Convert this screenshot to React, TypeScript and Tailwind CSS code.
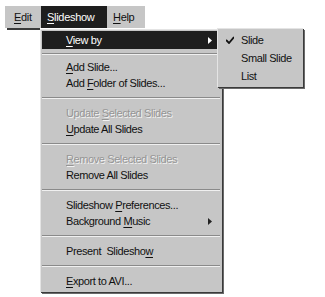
const font = { fontFamily: '"Liberation Sans", Arial, sans-serif' }

type Item =
  | { kind: 'sep' }
  | { kind: 'item'; pre: string; key: string; post: string; disabled?: boolean; arrow?: boolean; active?: boolean }

const items: Item[] = [
  { kind: 'item', pre: '', key: 'V', post: 'iew by', arrow: true, active: true },
  { kind: 'sep' },
  { kind: 'item', pre: '', key: 'A', post: 'dd Slide...' },
  { kind: 'item', pre: 'Add ', key: 'F', post: 'older of Slides...' },
  { kind: 'sep' },
  { kind: 'item', pre: 'Update ', key: 'S', post: 'elected Slides', disabled: true },
  { kind: 'item', pre: '', key: 'U', post: 'pdate All Slides' },
  { kind: 'sep' },
  { kind: 'item', pre: '', key: 'R', post: 'emove Selected Slides', disabled: true },
  { kind: 'item', pre: 'Remove All Slides', key: '', post: '' },
  { kind: 'sep' },
  { kind: 'item', pre: 'Slideshow ', key: 'P', post: 'references...' },
  { kind: 'item', pre: 'Background ', key: 'M', post: 'usic', arrow: true },
  { kind: 'sep' },
  { kind: 'item', pre: 'Present  Slidesho', key: 'w', post: '' },
  { kind: 'sep' },
  { kind: 'item', pre: '', key: 'E', post: 'xport to AVI...' },
]

function Arrow({ light }: { light?: boolean }) {
  return (
    <svg width="4" height="7" viewBox="0 0 4 7" className="mr-[8px]">
      <path d="M0 0 L4 3.5 L0 7 Z" fill={light ? '#ffffff' : '#222222'} />
    </svg>
  )
}

function MenuRow({ it, first }: { it: Extract<Item, { kind: 'item' }>; first: boolean }) {
  const text = it.disabled ? 'text-[#959595]' : it.active ? 'text-white' : 'text-[#111111]'
  return (
    <div
      className={`flex items-center justify-between pl-[24px] ${first ? 'h-[18px]' : 'h-[16px]'} ${
        it.active ? 'bg-[#1e1e1e]' : ''
      }`}
    >
      <span
        className={`text-[11px] tracking-[-0.4px] whitespace-pre ${text}`}
        style={it.disabled ? { textShadow: '1px 1px 0 #f2f2f2' } : undefined}
      >
        {it.pre}
        {it.key && <span className="underline underline-offset-2">{it.key}</span>}
        {it.post}
      </span>
      {it.arrow && <Arrow light={it.active} />}
    </div>
  )
}

function Separator({ first }: { first: boolean }) {
  return (
    <div className={`flex flex-col justify-center ${first ? 'h-[10px]' : 'h-[14px]'}`}>
      <div className="h-px bg-[#8a8a8a]" />
      <div className="h-px bg-[#f0f0f0]" />
    </div>
  )
}

export default function App() {
  return (
    <div className="w-[325px] h-[297px] bg-white overflow-hidden" style={font}>
      {/* menu bar */}
      <div className="ml-[5px] mt-[6px] w-[140px] h-[22px] bg-[#c6c6c6] flex items-center text-[11px] tracking-[-0.3px] text-[#111111]">
        <span className="ml-[9px] w-[27px]">
          <span className="underline underline-offset-2">E</span>dit
        </span>
        <span className="h-full px-[6px] flex items-center bg-[#1e1e1e] text-white w-[66px]">
          <span className="underline underline-offset-2">S</span>lideshow
        </span>
        <span className="ml-[6px]">
          <span className="underline underline-offset-2">H</span>elp
        </span>
      </div>
      <div className="flex items-start">
        <div className="ml-[7px] w-[33px] h-[2px] bg-[#3a3a3a]" />
        {/* dropdown */}
        <div className="mt-[1px] w-[182px] h-[263px] bg-[#c6c6c6] border-l border-t border-[#e4e4e4] shadow-[1px_1px_0_#3a3a3a,2px_2px_0_#6a6a6a] p-[1px] pr-[2px]">
          <div className="flex flex-col">
            {items.map((it, i) =>
              it.kind === 'sep' ? (
                <Separator key={i} first={i === 1} />
              ) : (
                <MenuRow key={i} it={it} first={i === 0} />
              )
            )}
          </div>
        </div>
        {/* submenu */}
        <div className="-ml-[5px] w-[86px] h-[59px] bg-[#c6c6c6] border-l border-t border-[#e4e4e4] shadow-[1px_1px_0_#3a3a3a,2px_2px_0_#6a6a6a] pt-[2px] text-[11px] tracking-[-0.4px] text-[#111111]">
          {['Slide', 'Small Slide', 'List'].map((s, i) => (
            <div key={s} className="h-[18px] flex items-center">
              <span className="w-[23px] flex justify-center">
                {i === 0 && (
                  <svg width="8" height="8" viewBox="0 0 8 8">
                    <path d="M0 4 L3 7 L8 1" stroke="#111111" strokeWidth="1.8" fill="none" />
                  </svg>
                )}
              </span>
              <span>{s}</span>
            </div>
          ))}
        </div>
      </div>
    </div>
  )
}
